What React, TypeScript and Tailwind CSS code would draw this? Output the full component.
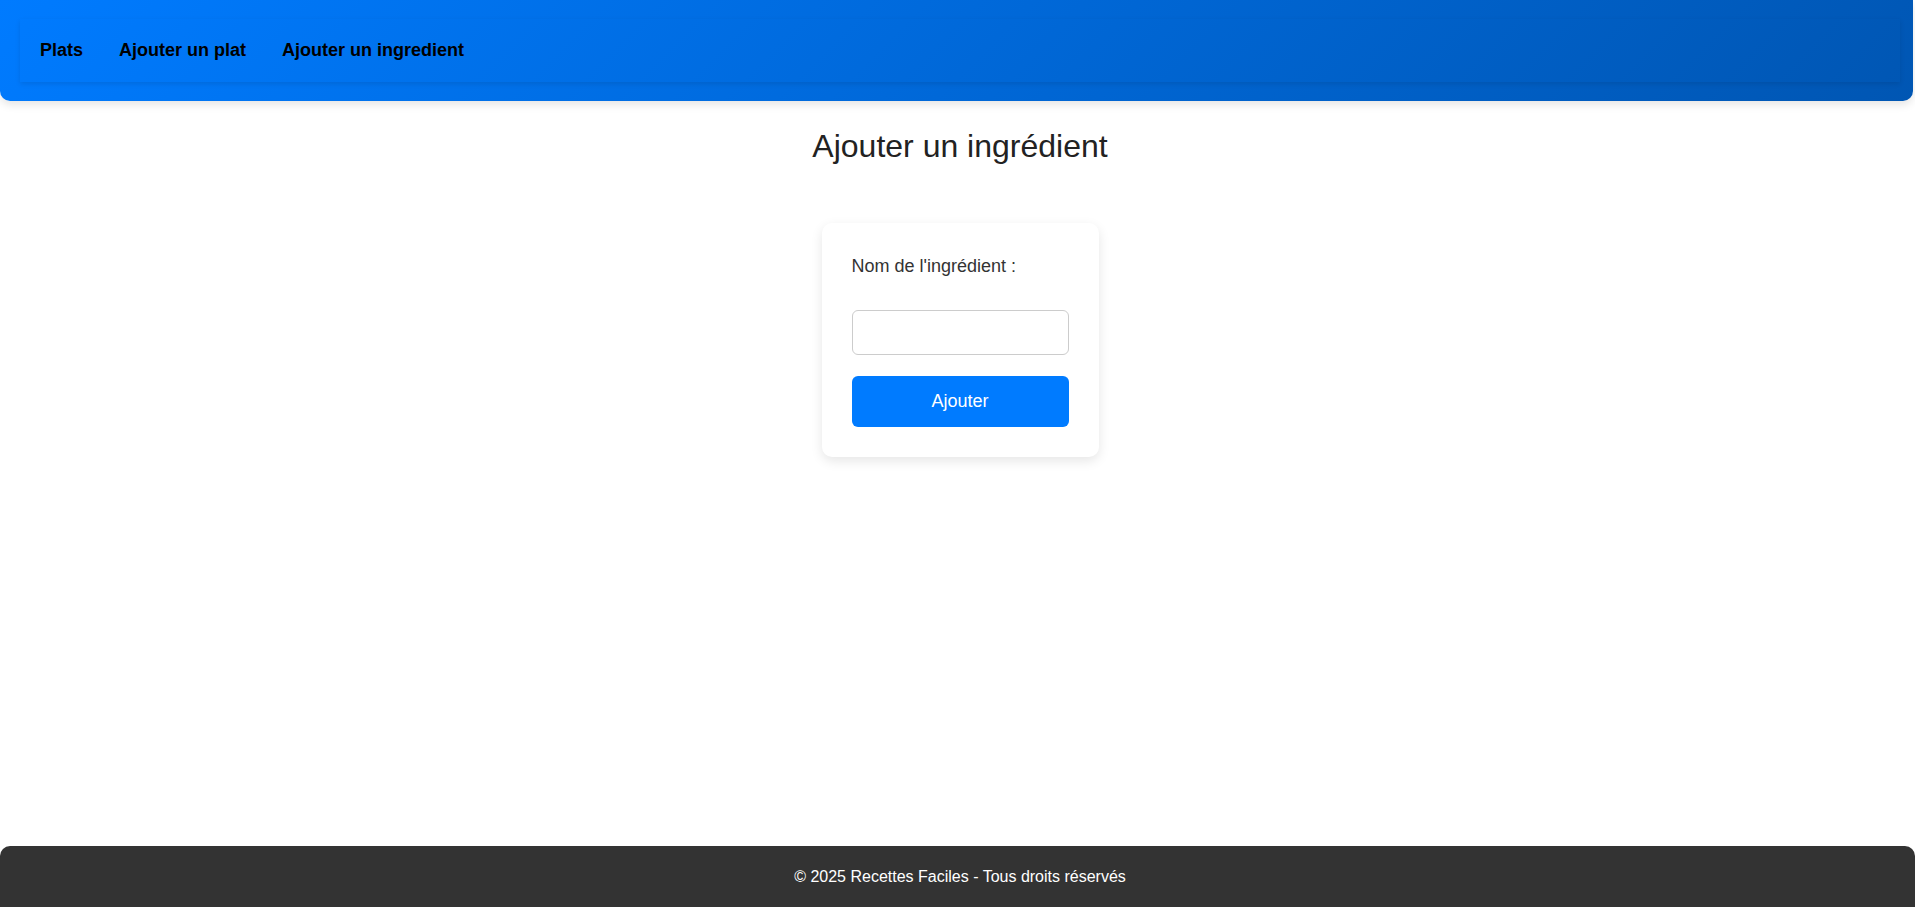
const links = ["Plats", "Ajouter un plat", "Ajouter un ingredient"];

export default function App() {
  return (
    <div className="flex min-h-screen flex-col bg-white font-['Liberation_Sans',Arial,sans-serif] text-[#222]">
      <header className="mr-[2px] h-[101px] shrink-0 rounded-b-[10px] bg-[linear-gradient(135deg,#007bff,#0056b3)] pt-[19px] shadow-[0_4px_8px_rgba(0,0,0,0.1)]">
        <nav className="ml-[20px] mr-[13px] flex h-[63px] items-center gap-[36px] pl-[20px] shadow-[0_2px_5px_rgba(0,0,0,0.1)]">
          {links.map((l) => (
            <a key={l} href="#" className="text-[18px] font-bold leading-[normal] text-black">
              {l}
            </a>
          ))}
        </nav>
      </header>

      <main className="flex flex-col items-center pl-[5px]">
        <h1 className="mt-[27px] text-[32px] font-normal leading-[normal] text-[#222]">
          Ajouter un ingrédient
        </h1>

        <form
          className="mt-[58px] w-[277px] rounded-[10px] bg-white p-[30px] shadow-[0_4px_12px_rgba(0,0,0,0.1)]"
          onSubmit={(e) => e.preventDefault()}
        >
          <label htmlFor="nom" className="mt-[3px] block text-[18px] leading-[normal] text-[#333]">
            Nom de l'ingrédient :
          </label>
          <input
            id="nom"
            type="text"
            className="mt-[33px] block h-[45px] w-full rounded-[6px] border border-[#ccc] px-[10px] text-[16px] outline-none"
          />
          <button
            type="submit"
            className="mt-[21px] block h-[51px] w-full rounded-[6px] bg-[#007bff] text-[18px] text-white"
          >
            Ajouter
          </button>
        </form>
      </main>

      <footer className="mt-auto flex h-[61px] shrink-0 items-center justify-center rounded-t-[10px] bg-[#333] pl-[5px] text-[16px] text-white">
        © 2025 Recettes Faciles - Tous droits réservés
      </footer>
    </div>
  );
}
